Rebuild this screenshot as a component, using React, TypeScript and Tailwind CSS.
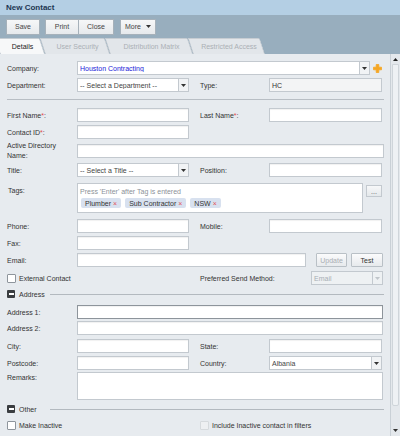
import React from "react";

const font = "font-['Liberation_Sans',Arial,sans-serif]";

function Input({ w, dark, disabled }: { w: string; dark?: boolean; disabled?: boolean }) {
  return (
    <div
      className={`h-[14px] shrink-0 border ${w} ${
        dark ? "border-[#8d949b]" : "border-[#c3c9cf]"
      } ${disabled ? "bg-[#f3f4f5]" : "bg-white"} shadow-[inset_0_1px_1px_rgba(0,0,0,0.06)]`}
    />
  );
}

function Caret({ muted }: { muted?: boolean }) {
  return (
    <svg width="5" height="3" viewBox="0 0 5 3">
      <path d="M0 0h5L2.5 3z" fill={muted ? "#c0c5ca" : "#333"} />
    </svg>
  );
}

function Select({ w, text, link, disabled }: { w: string; text: string; link?: boolean; disabled?: boolean }) {
  return (
    <div
      className={`flex h-[14px] shrink-0 items-center border border-[#c3c9cf] ${w} ${
        disabled ? "bg-[#eef1f3]" : "bg-white"
      }`}
    >
      <span
        className={`flex-1 truncate pl-[2px] ${
          link ? "text-[#1a1ad8] underline underline-offset-1" : disabled ? "text-[#a7adb3]" : "text-[#444]"
        }`}
      >
        {text}
      </span>
      <span
        className={`flex h-full w-[10px] items-center justify-center border-l border-[#c3c9cf] ${
          disabled ? "bg-[#eef1f3]" : "bg-[#f1f3f5]"
        }`}
      >
        <Caret muted={disabled} />
      </span>
    </div>
  );
}

function Label({ children, w = "w-[70px]", req }: { children: React.ReactNode; w?: string; req?: boolean }) {
  return (
    <div className={`${w} shrink-0 text-[#333]`}>
      {children}
      {req && <span className="text-[#e2494d]">*</span>}:
    </div>
  );
}

function Btn({ children, disabled, w }: { children: React.ReactNode; disabled?: boolean; w: string }) {
  return (
    <div
      className={`flex h-[14px] ${w} items-center justify-center rounded-[1px] border border-[#b9c0c6] bg-gradient-to-b from-[#fbfbfc] to-[#e7eaed] ${
        disabled ? "text-[#a9aeb3]" : "text-[#333]"
      }`}
    >
      {children}
    </div>
  );
}

function Check({ disabled }: { disabled?: boolean }) {
  return (
    <div
      className={`h-[9px] w-[9px] shrink-0 rounded-[1px] border ${
        disabled ? "border-[#d6dadd] bg-[#eef0f2]" : "border-[#8e959c] bg-white"
      }`}
    />
  );
}

function Section({ title }: { title: string }) {
  return (
    <div className="flex h-[10px] items-center pr-[6px]">
      <div className="flex h-[8px] w-[8px] items-center justify-center rounded-[1px] bg-[#3a3d40]">
        <div className="h-[1.5px] w-[5px] bg-white" />
      </div>
      <div className="ml-[4px] w-[31px] text-[#333]">{title}</div>
      <div className="h-px flex-1 bg-[#b3b9bf]" />
    </div>
  );
}

function Chip({ text }: { text: string }) {
  return (
    <div className="flex h-[10px] items-center gap-[2px] rounded-[2px] bg-[#d8e1ef] px-[4px] text-[#333]">
      {text}
      <span className="text-[#e0555a]">×</span>
    </div>
  );
}

function Tab({ text, w, active }: { text: string; w: string; active?: boolean }) {
  return (
    <div className={`relative flex h-[16px] ${w} items-center justify-center`}>
      <span
        className={`absolute inset-0 origin-bottom skew-x-[18deg] rounded-tr-[2px] border border-b-0 ${
          active ? "border-[#c5ccd2] bg-[#f7f8f9]" : "border-[#c7cdd3] bg-[#e2e6ea]"
        }`}
      />
      <span className={`relative ${active ? "text-[#222]" : "text-[#abb0b5]"}`}>{text}</span>
    </div>
  );
}

export default function App() {
  return (
    <div className={`flex h-[436px] w-[400px] flex-col overflow-hidden bg-[#e7ebef] text-[7px] leading-none ${font}`}>
      {/* title */}
      <div className="flex h-[15px] shrink-0 items-center bg-[#b4cfe4] pl-[6px] text-[8px] font-bold text-[#1d3652]">
        New Contact
      </div>

      {/* toolbar + tabs */}
      <div className="flex h-[39px] shrink-0 flex-col bg-[#98aebe]">
        <div className="flex h-[23px] items-center pl-[6px] text-[#444]">
          <div className="flex h-[16px] w-[34px] items-center justify-center border border-[#a6b1ba] bg-gradient-to-b from-[#f6f7f8] to-[#e6e9ec]">
            Save
          </div>
          <div className="ml-[5px] flex h-[16px] w-[34px] items-center justify-center border border-[#a6b1ba] bg-gradient-to-b from-[#f6f7f8] to-[#e6e9ec]">
            Print
          </div>
          <div className="flex h-[16px] w-[35px] items-center justify-center border border-l-0 border-[#a6b1ba] bg-gradient-to-b from-[#f6f7f8] to-[#e6e9ec]">
            Close
          </div>
          <div className="ml-[6px] flex h-[16px] w-[36px] items-center justify-center gap-[5px] border border-[#a6b1ba] bg-gradient-to-b from-[#f6f7f8] to-[#e6e9ec]">
            More
            <Caret />
          </div>
        </div>
        <div className="mt-auto flex items-end">
          <Tab text="Details" w="w-[45px]" active />
          <Tab text="User Security" w="w-[65px]" />
          <Tab text="Distribution Matrix" w="w-[83px]" />
          <Tab text="Restricted Access" w="w-[72px]" />
        </div>
      </div>

      {/* body */}
      <div className="flex min-h-0 flex-1">
        <div className="flex w-[390px] flex-col pl-[7px] pt-[7px]">
          <div className="flex h-[14px] items-center">
            <Label>Company</Label>
            <Select w="w-[293px]" text="Houston Contracting" link />
            <svg className="ml-[3px]" width="9" height="9" viewBox="0 0 9 9">
              <path
                d="M3.2 0.5h2.6v2.7h2.7v2.6H5.8v2.7H3.2V5.8H0.5V3.2h2.7z"
                fill="#f5a623"
                stroke="#f5a623"
                strokeWidth="0.8"
                strokeLinejoin="round"
              />
            </svg>
          </div>
          <div className="mt-[3px] flex h-[14px] items-center">
            <Label>Department</Label>
            <Select w="w-[112px]" text="-- Select a Department --" />
            <div className="w-[11px]" />
            <Label w="w-[69px]">Type</Label>
            <div className="flex h-[14px] w-[113px] items-center border border-[#c3c9cf] bg-[#f3f4f5] pl-[2px] text-[#333]">
              HC
            </div>
          </div>
          <div className="mr-[6px] mt-[7px] h-px bg-[#b8bec4]" />

          <div className="mt-[8px] flex h-[14px] items-center">
            <Label req>First Name</Label>
            <Input w="w-[112px]" />
            <div className="w-[11px]" />
            <Label w="w-[69px]" req>Last Name</Label>
            <Input w="w-[113px]" />
          </div>
          <div className="mt-[3px] flex h-[14px] items-center">
            <Label req>Contact ID</Label>
            <Input w="w-[112px]" />
          </div>
          <div className="mt-[5px] flex h-[14px] items-center">
            <div className="w-[70px] shrink-0 leading-[10px] text-[#333]">
              Active Directory
              <br />
              Name:
            </div>
            <Input w="w-[307px]" />
          </div>
          <div className="mt-[5px] flex h-[14px] items-center">
            <Label>Title</Label>
            <Select w="w-[112px]" text="-- Select a Title --" />
            <div className="w-[11px]" />
            <Label w="w-[69px]">Position</Label>
            <Input w="w-[113px]" />
          </div>

          <div className="mt-[6px] flex">
            <div className="w-[70px] shrink-0 pl-px pt-[4px] text-[#333]">Tags:</div>
            <div className="flex h-[30px] w-[286px] flex-col gap-[3px] border border-[#c3c9cf] bg-white px-[2px] pt-[4px]">
              <div className="text-[#8b9198]">Press 'Enter' after Tag is entered</div>
              <div className="flex gap-[4px] pl-px">
                <Chip text="Plumber" />
                <Chip text="Sub Contractor" />
                <Chip text="NSW" />
              </div>
            </div>
            <div className="ml-[3px] mt-[2px] flex h-[12px] w-[16px] items-center justify-center border border-[#c3c9cf] bg-gradient-to-b from-[#f7f8f9] to-[#e4e8eb] text-[#555]">
              ...
            </div>
          </div>

          <div className="mt-[6px] flex h-[14px] items-center">
            <Label>Phone</Label>
            <Input w="w-[112px]" />
            <div className="w-[11px]" />
            <Label w="w-[69px]">Mobile</Label>
            <Input w="w-[113px]" />
          </div>
          <div className="mt-[3px] flex h-[14px] items-center">
            <Label>Fax</Label>
            <Input w="w-[112px]" />
          </div>
          <div className="mt-[3px] flex h-[14px] items-center">
            <Label>Email</Label>
            <Input w="w-[229px]" />
            <div className="ml-[10px]">
              <Btn w="w-[31px]" disabled>
                Update
              </Btn>
            </div>
            <div className="ml-[4px]">
              <Btn w="w-[32px]">Test</Btn>
            </div>
          </div>
          <div className="mt-[4px] flex h-[14px] items-center">
            <div className="flex w-[193px] shrink-0 items-center gap-[3px]">
              <Check />
              <span className="text-[#333]">External Contact</span>
            </div>
            <div className="w-[111px] shrink-0 text-[#333]">Preferred Send Method:</div>
            <Select w="w-[72px]" text="Email" disabled />
          </div>

          <div className="mt-[4px]">
            <Section title="Address" />
          </div>
          <div className="mt-[6px] flex h-[14px] items-center">
            <Label>Address 1</Label>
            <Input w="w-[306px]" dark />
          </div>
          <div className="mt-[2px] flex h-[14px] items-center">
            <Label>Address 2</Label>
            <Input w="w-[306px]" />
          </div>
          <div className="mt-[4px] flex h-[14px] items-center">
            <Label>City</Label>
            <Input w="w-[112px]" />
            <div className="w-[11px]" />
            <Label w="w-[69px]">State</Label>
            <Input w="w-[113px]" />
          </div>
          <div className="mt-[3px] flex h-[14px] items-center">
            <Label>Postcode</Label>
            <Input w="w-[112px]" />
            <div className="w-[11px]" />
            <Label w="w-[69px]">Country</Label>
            <Select w="w-[113px]" text="Albania" />
          </div>
          <div className="mt-[2px] flex">
            <div className="w-[70px] shrink-0 pt-[2px] text-[#333]">Remarks:</div>
            <div className="h-[28px] w-[306px] border border-[#c3c9cf] bg-white" />
          </div>

          <div className="mt-[4px]">
            <Section title="Other" />
          </div>
          <div className="mt-[6px] flex h-[10px] items-center">
            <div className="flex w-[193px] shrink-0 items-center gap-[3px]">
              <Check />
              <span className="text-[#333]">Make Inactive</span>
            </div>
            <div className="flex items-center gap-[3px]">
              <Check disabled />
              <span className="text-[#333]">Include Inactive contact in filters</span>
            </div>
          </div>
        </div>

        {/* scrollbar */}
        <div className="flex w-[10px] flex-col border-l border-[#c9d0d6] bg-[#e4e8ec]">
          <div className="flex h-[10px] items-center justify-center">
            <svg width="5" height="3" viewBox="0 0 5 3">
              <path d="M0 3h5L2.5 0z" fill="#222" />
            </svg>
          </div>
          <div className="mx-[1px] mb-[18px] flex-1 rounded-b-[2px] border border-[#cfd5da] bg-[#eef1f4]" />
          <div className="flex h-[12px] items-center justify-center">
            <Caret />
          </div>
        </div>
      </div>
    </div>
  );
}
